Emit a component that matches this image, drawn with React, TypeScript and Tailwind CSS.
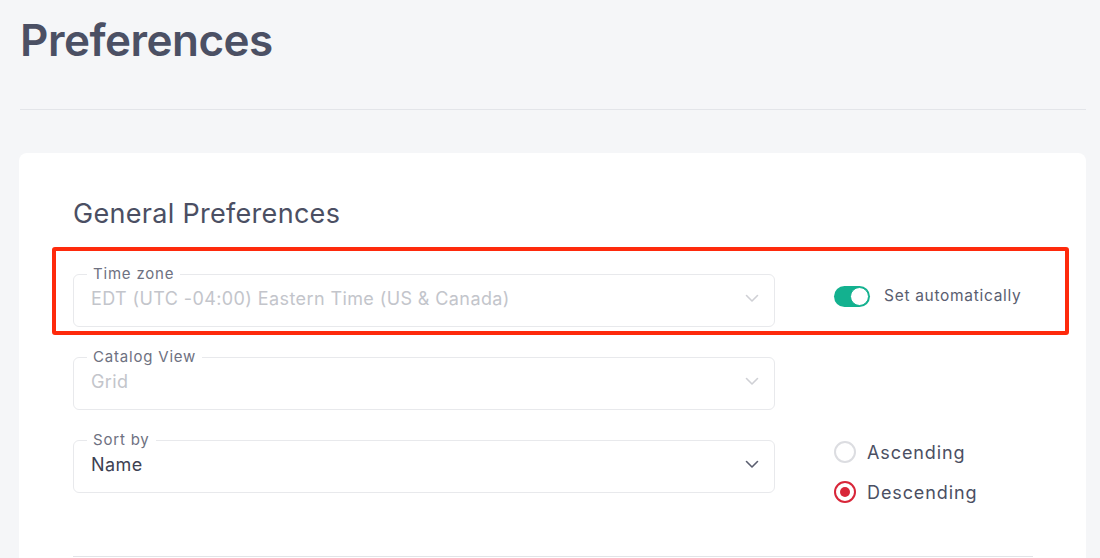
function Chevron({ className }: { className?: string }) {
  return (
    <svg width="16" height="16" viewBox="0 0 16 16" fill="none" className={className}>
      <path d="M2.5 5.5 8 11l5.5-5.5" stroke="currentColor" strokeWidth="1.6" strokeLinecap="round" strokeLinejoin="round" />
    </svg>
  );
}

function Field({
  label,
  value,
  disabled,
}: {
  label: string;
  value: string;
  disabled?: boolean;
}) {
  return (
    <fieldset className="w-[702px] shrink-0 rounded-md border border-[#e8e9ec] px-[17px] pb-[13px]">
      <legend className="-ml-[4px] px-[6px] text-[15px] leading-[18px] tracking-[0.8px] text-[#6e7181]">
        {label}
      </legend>
      <div className="flex h-[30px] items-center justify-between">
        <span
          className={`text-[18px] tracking-[0.4px] ${disabled ? "text-[#c3c5cb]" : "text-[#3d4152]"}`}
        >
          {value}
        </span>
        <Chevron className={`-mr-[3px] ${disabled ? "text-[#cfd0d5]" : "text-[#5a5e6f]"}`} />
      </div>
    </fieldset>
  );
}

function Radio({ label, checked }: { label: string; checked?: boolean }) {
  return (
    <label className="flex h-10 items-center gap-[11px]">
      <span
        className={`flex h-[22px] w-[22px] items-center justify-center rounded-full border-2 ${
          checked ? "border-[#d82639]" : "border-[#dcdde1]"
        }`}
      >
        {checked && <span className="h-[10px] w-[10px] rounded-full bg-[#d82639]" />}
      </span>
      <span className="text-[18px] tracking-[0.9px] text-[#4b4f63]">{label}</span>
    </label>
  );
}

export default function App() {
  return (
    <div
      className="h-[558px] overflow-hidden bg-[#f5f6f8] pl-5 pr-[14px]"
      style={{ fontFamily: "Inter, 'Noto Sans', sans-serif" }}
    >
      <h1 className="pt-[13px] text-[44px] font-semibold leading-[54px] tracking-[-0.5px] text-[#4b5064]">
        Preferences
      </h1>
      <div className="mt-[42px] h-px bg-[#e3e5e9]" />

      <div className="relative -ml-px mt-[43px] rounded-lg bg-white pb-10 pl-[54px] pr-[53px] pt-[45px]">
        <h2 className="text-[27px] leading-[32px] tracking-[0.3px] text-[#4b4f63]">General Preferences</h2>

        <div className="mt-[35px] flex flex-col gap-[21px]">
          <div className="flex items-start gap-[59px]">
            <Field label="Time zone" value="EDT (UTC -04:00) Eastern Time (US & Canada)" disabled />
            <div className="pt-[21px]">
              <div className="flex h-5 items-center gap-[14px]">
                <span className="flex h-[21px] w-[36px] items-center justify-end rounded-full bg-[#13b18f] p-px">
                  <span className="h-[19px] w-[19px] rounded-full border border-[#13b18f] bg-white" />
                </span>
                <span className="text-[15.5px] tracking-[0.7px] text-[#5a5e70]">Set automatically</span>
              </div>
            </div>
          </div>

          <div className="flex items-start gap-[59px]">
            <Field label="Catalog View" value="Grid" disabled />
          </div>

          <div className="flex items-start gap-[59px]">
            <Field label="Sort by" value="Name" />
            <div className="pt-px">
              <Radio label="Ascending" />
              <Radio label="Descending" checked />
            </div>
          </div>
        </div>

        <div className="mt-[44px] h-px bg-[#e2e3e7]" />

        {/* highlight annotation */}
        <div className="pointer-events-none absolute left-[33px] top-[94px] h-[88px] w-[1017px] rounded-[3px] border-4 border-[#fe2a0c]" />
      </div>
    </div>
  );
}
